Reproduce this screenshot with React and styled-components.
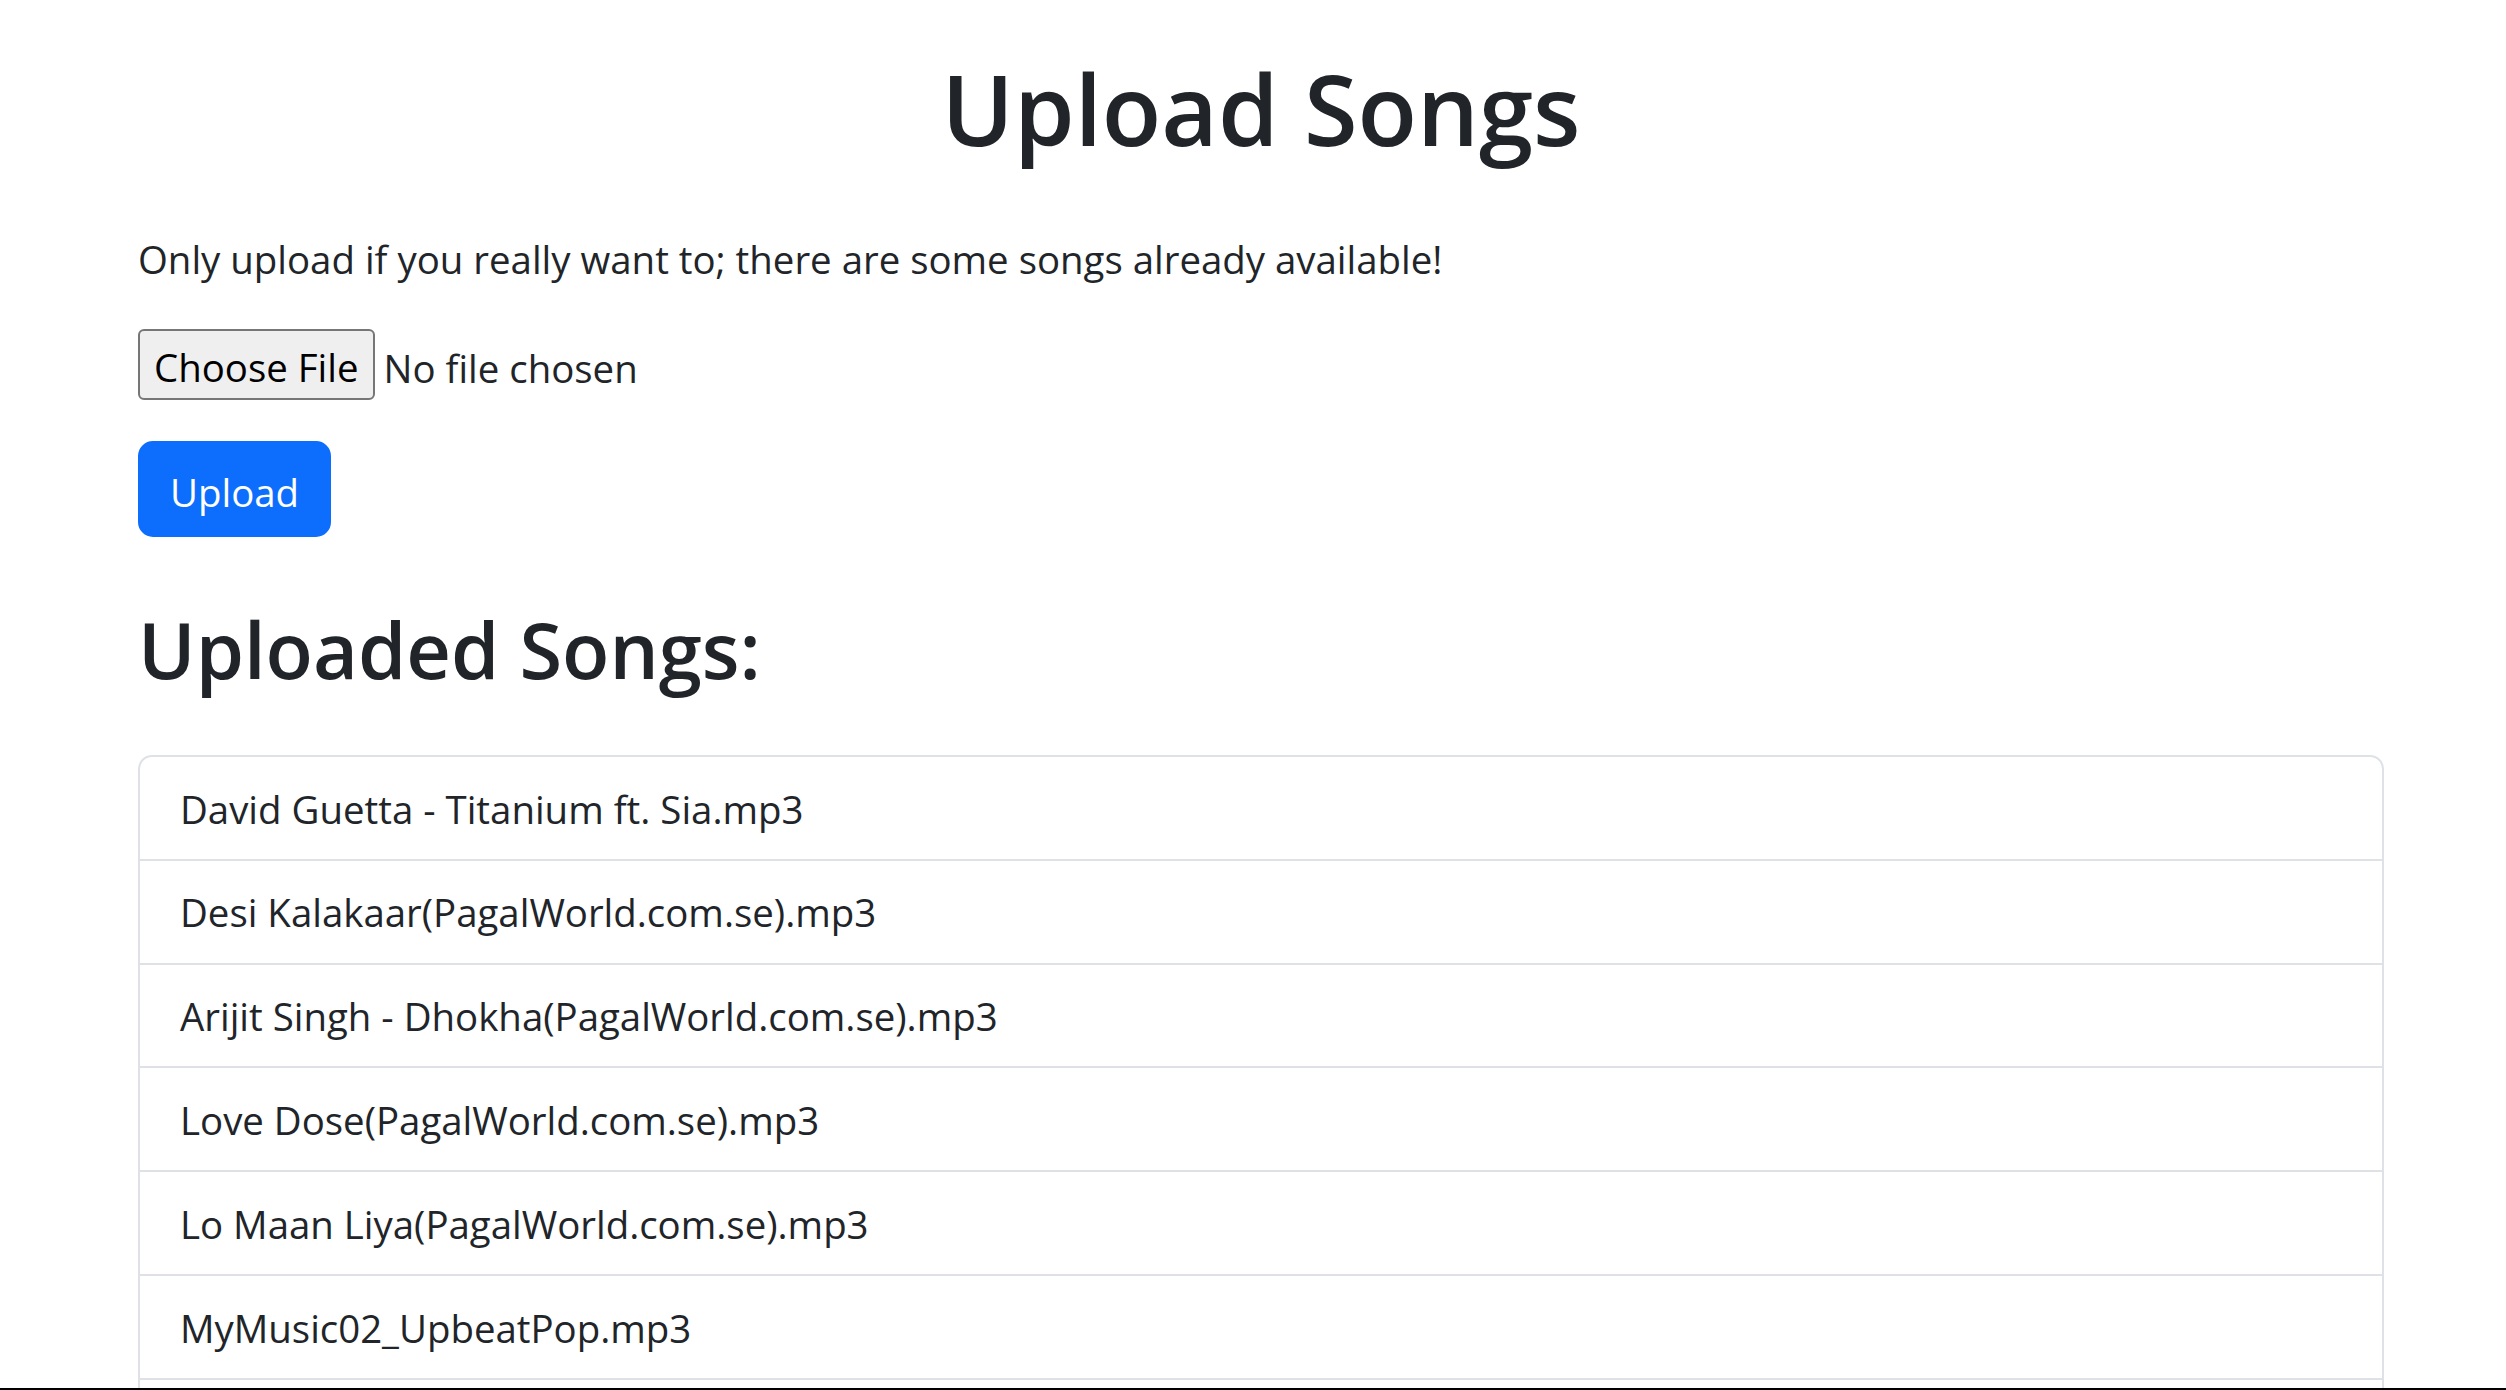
import React from "react";
import styled, { createGlobalStyle } from "styled-components";

const Global = createGlobalStyle`
  html, body { margin: 0; padding: 0; background: #fff; overflow: hidden; }
  body {
    font-family: "Open Sans", "Noto Sans", "Liberation Sans", sans-serif;
    color: #212529;
    -webkit-font-smoothing: antialiased;
  }
`;

const Container = styled.main`
  box-sizing: border-box;
  width: 2506px;
  padding: 0 122px 0 138px;
`;

const Title = styled.h1`
  margin: 49px 0 0;
  text-align: center;
  font-size: 97.5px;
  line-height: 120px;
  font-weight: 600;
`;

const Lead = styled.p`
  margin: 60px 0 40px;
  font-size: 38.4px;
  line-height: 60px;
`;

const FileRow = styled.div`
  display: flex;
  align-items: center;
  gap: 9px;
  height: 71px;
`;

const FileButton = styled.button`
  box-sizing: border-box;
  height: 71px;
  padding: 6px 14px 0;
  border: 2px solid #767676;
  border-radius: 6px;
  background: #efefef;
  color: #000;
  font-family: inherit;
  font-size: 38.4px;
  line-height: 61px;
`;

const FileStatus = styled.span`
  padding-top: 6px;
  font-size: 38.4px;
  line-height: 60px;
`;

const PrimaryButton = styled.button`
  display: block;
  margin-top: 41px;
  box-sizing: border-box;
  height: 96px;
  padding: 19px 30px 13px;
  border: 2px solid #0d6efd;
  border-radius: 15px;
  background: #0d6efd;
  color: #fff;
  font-family: inherit;
  font-size: 38.4px;
  line-height: 60px;
`;

const SectionTitle = styled.h2`
  margin: 64px 0 0;
  font-size: 77.6px;
  line-height: 96px;
  font-weight: 600;
`;

const SongList = styled.ul`
  list-style: none;
  margin: 58px 0 0;
  padding: 0;
  border: 2px solid #dee2e6;
  border-radius: 14px;
`;

const SongItem = styled.li`
  padding: 21.6px 40px 20.2px;
  font-size: 38.4px;
  line-height: 60px;
  & + & { border-top: 2px solid #dee2e6; }
`;

const EdgeLine = styled.div`
  position: fixed;
  left: 0;
  right: 0;
  bottom: 0;
  height: 2px;
  background: #000;
`;

const songs = [
  "David Guetta - Titanium ft. Sia.mp3",
  "Desi Kalakaar(PagalWorld.com.se).mp3",
  "Arijit Singh - Dhokha(PagalWorld.com.se).mp3",
  "Love Dose(PagalWorld.com.se).mp3",
  "Lo Maan Liya(PagalWorld.com.se).mp3",
  "MyMusic02_UpbeatPop.mp3",
  "MyMusic03_ChillBeats.mp3",
];

export default function App() {
  return (
    <>
      <Global />
      <Container>
        <Title>Upload Songs</Title>
        <Lead>Only upload if you really want to; there are some songs already available!</Lead>
        <FileRow>
          <FileButton type="button">Choose File</FileButton>
          <FileStatus>No file chosen</FileStatus>
        </FileRow>
        <PrimaryButton type="button">Upload</PrimaryButton>
        <SectionTitle>Uploaded Songs:</SectionTitle>
        <SongList>
          {songs.map((s) => (
            <SongItem key={s}>{s}</SongItem>
          ))}
        </SongList>
      </Container>
      <EdgeLine />
    </>
  );
}
